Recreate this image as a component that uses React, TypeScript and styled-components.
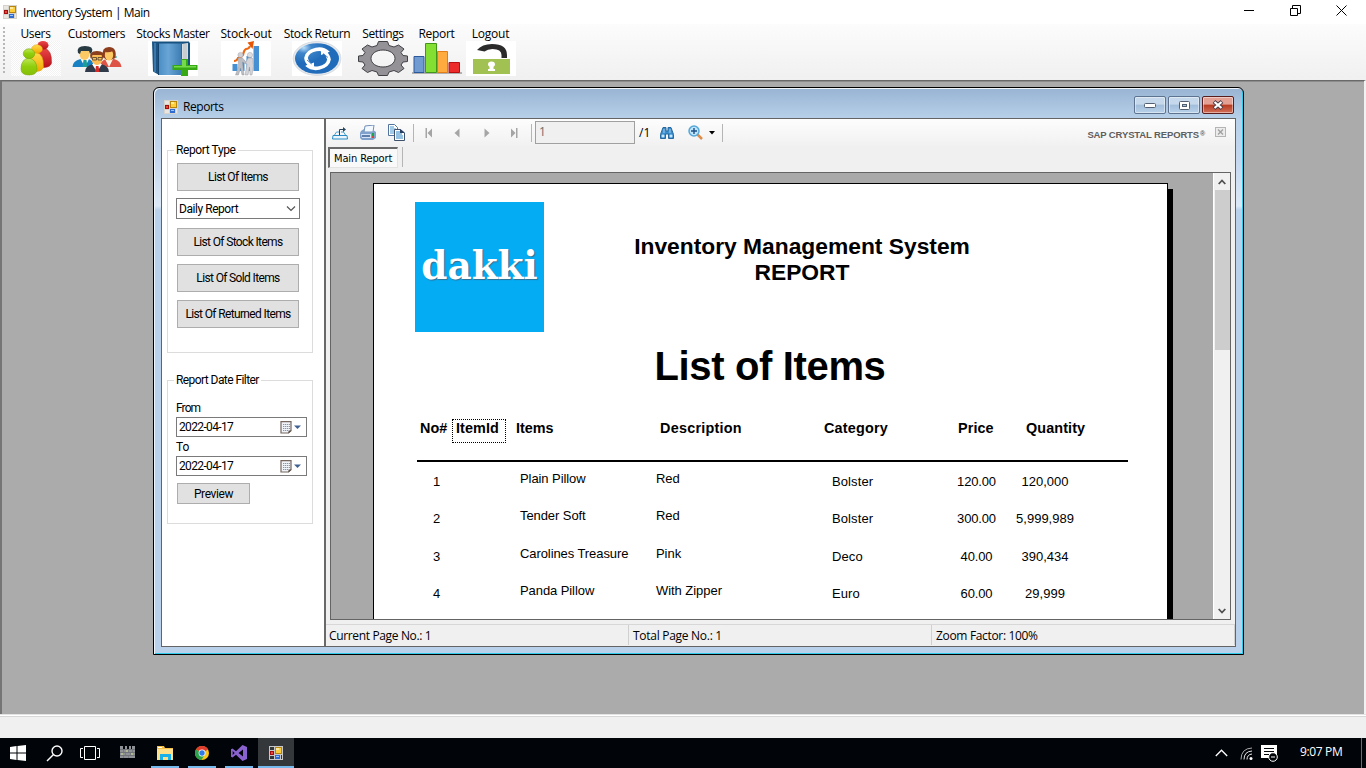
import React from 'react';
import styled, { createGlobalStyle } from 'styled-components';

const Global = createGlobalStyle`
  * { box-sizing: border-box; }
  body { margin: 0; overflow: hidden; background: #ababab; }
  svg { display: block; flex: none; }
`;

const segoe = `"Open Sans", "Noto Sans", sans-serif`;
const small = `Roboto, "Liberation Sans", sans-serif`;
const arial = `"Liberation Sans", Arial, sans-serif`;

const Screen = styled.div`
  width: 1366px;
  height: 768px;
  display: flex;
  flex-direction: column;
  overflow: hidden;
  color: #000;
  font: 12px ${segoe};
  white-space: nowrap;
`;

const TitleBar = styled.header`
  height: 24px;
  flex: none;
  display: flex;
  align-items: center;
  padding: 0 19px 0 3px;
  background: #fff;
`;

const AppTitle = styled.span<{ $spacing: number; $gap: number }>`
  margin-left: ${(p) => p.$gap}px;
  letter-spacing: ${(p) => p.$spacing}px;
`;

const WindowControls = styled.div`
  margin-left: auto;
  display: flex;
  gap: 35px;
  padding-bottom: 4px;
`;

const MainToolbar = styled.nav`
  height: 56px;
  flex: none;
  display: flex;
  align-items: stretch;
  background: linear-gradient(#fcfcfc, #f0f0f0);
`;

const Grip = styled.div`
  width: 3px;
  margin: 3px 4px 6px 3px;
  background: repeating-linear-gradient(#b8b8b8 0 2px, transparent 2px 4px) 0 0 / 2px 100% no-repeat;
`;

const ToolItem = styled.div<{ $width: number }>`
  width: ${(p) => p.$width}px;
  display: flex;
  flex-direction: column;
  align-items: center;
`;

const ToolLabel = styled.span<{ $spacing: number }>`
  height: 17px;
  line-height: 20px;
  letter-spacing: ${(p) => p.$spacing}px;
`;

const Workspace = styled.main`
  height: 634px;
  flex: none;
  padding: 6px 0 0 151px;
  background: #ababab;
  border-left: 2px solid #757575;
  border-top: 1px solid #696969;
  border-right: 2px solid #f2f2f2;
  box-shadow: inset 0 1px #8c8c8c;
`;

const StatusStrip = styled.footer`
  height: 24px;
  flex: none;
  background: #f0f0f0;
  border-top: 1px solid #e3e3e3;
  box-shadow: inset 0 1px #fff, inset 0 2px #d7d7d7;
`;

const ChildWindow = styled.section`
  width: 1091px;
  height: 568px;
  display: flex;
  flex-direction: column;
  border: 1px solid #000;
  border-radius: 6px 6px 0 0;
  padding: 0 7px 7px 7px;
  background: linear-gradient(#98b4d3 0, #b9d1ea 32px, #c4d7ef 70px, #dce8f6 118px, #b9d1ea 122px);
  box-shadow: inset 1px 1px #eef5fc, inset -1px -1px #2fcbea;
`;

const ChildTitle = styled.div`
  height: 30px;
  flex: none;
  display: flex;
  align-items: center;
  padding: 7px 2px 0 3px;
`;

const ChildButtons = styled.div`
  margin-left: auto;
  display: flex;
  gap: 2px;
  padding-bottom: 3px;
`;

const ChildButton = styled.span<{ $close?: boolean }>`
  width: 32px;
  height: 18px;
  display: grid;
  place-items: center;
  border: 1px solid ${(p) => (p.$close ? '#5a1d1d' : '#5e7390')};
  border-radius: 2px;
  box-shadow: inset 0 0 0 1px rgba(255, 255, 255, 0.45);
  background: ${(p) =>
    p.$close
      ? 'linear-gradient(#e3a196 0 45%, #b83a20 50%, #d0705a)'
      : 'linear-gradient(#c5d8ec 0 45%, #a2bedb 50%, #b9d2ea)'};
`;

const Client = styled.div`
  flex: 1;
  display: flex;
  border: 1px solid #646464;
  background: #f0f0f0;
  min-height: 0;
`;

const Sidebar = styled.aside`
  width: 164px;
  flex: none;
  padding: 31px 0 0 5px;
  background: #fff;
  border-right: 2px solid #696969;
  font: 12px ${small};
`;

const GroupBox = styled.div<{ $height: number; $gap?: number }>`
  width: 146px;
  height: ${(p) => p.$height}px;
  margin-bottom: ${(p) => p.$gap ?? 0}px;
  padding-left: 8px;
  border: 1px solid #dcdcdc;
`;

const Legend = styled.div<{ $spacing: number }>`
  width: fit-content;
  height: 16px;
  line-height: 16px;
  margin: -9px 0 0 -2px;
  padding: 0 2px;
  background: #fff;
  letter-spacing: ${(p) => p.$spacing}px;
`;

const FormButton = styled.div<{ $w?: number; $h?: number; $top: number; $spacing?: number }>`
  width: ${(p) => p.$w ?? 122}px;
  height: ${(p) => p.$h ?? 28}px;
  margin: ${(p) => p.$top}px 0 0 1px;
  display: flex;
  align-items: center;
  justify-content: center;
  border: 1px solid #adadad;
  background: #e1e1e1;
  letter-spacing: ${(p) => p.$spacing ?? -0.64}px;
`;

const Field = styled.div<{ $w: number; $h: number; $top: number; $spacing?: number }>`
  width: ${(p) => p.$w}px;
  height: ${(p) => p.$h}px;
  margin-top: ${(p) => p.$top}px;
  padding: 0 3px 0 2px;
  display: flex;
  align-items: center;
  justify-content: space-between;
  border: 1px solid #7a7a7a;
  background: #fff;
  letter-spacing: ${(p) => p.$spacing ?? -0.65}px;
`;

const FieldLabel = styled.div<{ $top: number }>`
  height: 14px;
  line-height: 14px;
  margin-top: ${(p) => p.$top}px;
  letter-spacing: -0.7px;
  letter-spacing: ${(p) => (p.$top > 5 ? -0.9 : -0.2)}px;
`;

const Viewer = styled.div`
  flex: 1;
  display: flex;
  flex-direction: column;
  min-width: 0;
`;

const ViewerToolbar = styled.div`
  height: 27px;
  flex: none;
  display: flex;
  align-items: center;
  padding: 0 9px 0 6px;
  background: linear-gradient(#fdfdfd, #f1f1f1);
`;

const Slot = styled.span<{ $gap: number }>`
  margin-left: ${(p) => p.$gap}px;
`;

const Separator = styled.i<{ $gap: number; $h?: number }>`
  width: 1px;
  height: ${(p) => p.$h ?? 18}px;
  margin-left: ${(p) => p.$gap}px;
  background: #b5b5b5;
`;

const PageInput = styled.span`
  width: 100px;
  height: 23px;
  margin-left: 3px;
  padding-left: 3px;
  border: 1px solid #a0a0a0;
  background: #f0f0f0;
  color: #6d6d6d;
  line-height: 20px;
`;

const Brand = styled.span`
  margin-left: auto;
  padding: 4px 10px 0 0;
  color: #5e5e5e;
  font: bold 9.5px ${arial};
  letter-spacing: -0.14px;
`;

const Registered = styled.span`
  margin-left: 1px;
  font-size: 7px;
  vertical-align: 2px;
`;

const TabRow = styled.div`
  height: 26px;
  flex: none;
  display: flex;
  padding: 1px 0 0 2px;
`;

const Tab = styled.div`
  width: 70px;
  height: 21px;
  padding-left: 4px;
  border: 2px solid;
  border-color: #696969 #e3e3e3 #e3e3e3 #696969;
  border-right-width: 1px;
  border-bottom-width: 1px;
  background: #f9f9f9;
  font: 11px/19px "DejaVu Sans Condensed", ${segoe};
  letter-spacing: -0.12px;
`;

const ReportArea = styled.div`
  height: 448px;
  flex: none;
  margin: 0 4px 0 4px;
  display: flex;
  border: 1px solid #646464;
  background: #a9a9a9;
`;

const Canvas = styled.div`
  flex: 1;
  padding: 10px 0 0 42px;
  overflow: hidden;
`;

const Sheet = styled.article`
  width: 795px;
  height: 520px;
  padding: 18px 0 0 41px;
  border: 1px solid #000;
  background: #fff;
  box-shadow: 5px 6px #000;
  font-family: ${arial};
`;

const SheetTop = styled.div`
  display: flex;
  height: 130px;
`;

const Logo = styled.div`
  width: 129px;
  height: 130px;
  flex: none;
  background: #04acf4;
  color: #fff;
  text-align: center;
  font: bold 39px/127px "DejaVu Serif", serif;
  text-shadow: 1px 1px 1px #356f91;
`;

const LogoWord = styled.span`
  display: block;
  transform: scaleX(0.96);
`;

const ReportTitle = styled.div`
  width: 380px;
  margin-left: 68px;
  padding-top: 31px;
  text-align: center;
  font-weight: bold;
  font-size: 22.8px;
  line-height: 26px;
`;

const Heading = styled.h1`
  width: 710px;
  margin: 10px 0 28px;
  text-align: center;
  font-size: 40px;
  letter-spacing: -0.35px;
  line-height: 48px;
`;

const Table = styled.div`
  width: 711px;
  margin-left: 2px;
`;

const TableRow = styled.div<{ $head?: boolean }>`
  display: grid;
  grid-template-columns: 35px 54px 150px 168px 128px 49px 88px;
  height: ${(p) => (p.$head ? '44px' : '37.5px')};
  margin-bottom: ${(p) => (p.$head ? 1 : 0)}px;
  align-items: ${(p) => (p.$head ? 'start' : 'center')};
  border-bottom: ${(p) => (p.$head ? '2px solid #000' : 'none')};
  font-size: ${(p) => (p.$head ? 14.4 : 13)}px;
  font-weight: ${(p) => (p.$head ? 'bold' : 'normal')};
  line-height: 20px;
`;

const Cell = styled.span<{ $indent?: number; $raised?: boolean; $center?: boolean; $selected?: boolean; $spacing?: number }>`
  padding-left: ${(p) => p.$indent ?? 0}px;
  padding-bottom: ${(p) => (p.$raised ? 6 : 0)}px;
  text-align: ${(p) => (p.$center ? 'center' : 'left')};
  letter-spacing: ${(p) => p.$spacing ?? 0}px;
  ${(p) => p.$selected && 'height: 24px; margin-top: 1px; line-height: 17px; border: 1px dotted #000;'}
`;

const ScrollBar = styled.div`
  width: 17px;
  display: flex;
  flex-direction: column;
  align-items: center;
  background: #f0f0f0;
  border-left: 1px solid #fff;
`;

const ScrollArrow = styled.span`
  height: 17px;
  display: grid;
  place-items: center;
`;

const ScrollThumb = styled.span`
  width: 15px;
  height: 160px;
  margin-bottom: auto;
  background: #cdcdcd;
`;

const ViewerStatus = styled.div`
  height: 22px;
  margin-top: 4px;
  display: flex;
  border-top: 1px solid #d7d7d7;
  line-height: 21px;
`;

const StatusCell = styled.span<{ $spacing: number; $indent?: number }>`
  width: 303px;
  height: 20px;
  padding-left: ${(p) => p.$indent ?? 4}px;
  border-right: 1px solid #d0d0d0;
  letter-spacing: ${(p) => p.$spacing}px;
`;

const Taskbar = styled.footer`
  height: 30px;
  flex: none;
  display: flex;
  background: #010409;
  color: #fff;
`;

const TaskItem = styled.span<{ $w: number; $line?: number; $active?: boolean }>`
  width: ${(p) => p.$w}px;
  height: 30px;
  display: grid;
  place-items: center;
  background: ${(p) => (p.$active ? '#35383b' : 'transparent')};
  background-image: ${(p) => (p.$line ? 'linear-gradient(#76b9ed, #76b9ed)' : 'none')};
  background-repeat: no-repeat;
  background-position: center bottom;
  background-size: ${(p) => p.$line ?? 0}px 2px;
`;

const Tray = styled.div`
  margin-left: auto;
  display: flex;
  align-items: center;
`;

const Clock = styled.span`
  width: 64px;
  height: 30px;
  padding-left: 2px;
  line-height: 28px;
  letter-spacing: -0.35px;
  border-right: 1px solid #6a6c6e;
  margin: 0 4px 0 20px;
`;

const FormIcon = ({ dark }: { dark?: boolean }) => (
  <svg width="14" height="14" viewBox="0 0 14 14">
    <rect width="14" height="14" fill={dark ? '#c8c8c8' : '#d6d2cc'} />
    <path d="M1 1h4v3H1zM1 10h4v3H1zM12 9h1v4h-1z" fill={dark ? '#34373a' : '#e9e6e0'} />
    <rect x="1" y="5" width="4" height="4" fill="#a50d0d" />
    <rect x="2" y="6" width="2" height="2" fill="#e8483c" />
    <rect x="6" y="1" width="7" height="7" fill="#b8860b" />
    <rect x="7" y="2" width="5" height="5" fill="#ffce3c" />
    <rect x="7" y="2" width="3" height="2" fill="#ffe99a" />
    <rect x="6" y="9" width="5" height="4" fill="#2f6bd0" />
    <rect x="7" y="10" width="3" height="1" fill="#9cc4ff" />
  </svg>
);

const UsersIcon = () => (
  <svg width="50" height="35" viewBox="0 0 50 35">
    <defs>
      <pattern id="dots" width="2" height="2" patternUnits="userSpaceOnUse">
        <path d="M0 0h1v1H0zM1 1h1v1H1z" fill="#f2f2f2" />
      </pattern>
      <linearGradient id="green" x2="0" y2="1"><stop stopColor="#c0e858" /><stop offset=".5" stopColor="#8fce0c" /><stop offset="1" stopColor="#86bf08" /></linearGradient>
      <linearGradient id="yellow" x2="0" y2="1"><stop stopColor="#ffdc4c" /><stop offset="1" stopColor="#f2a800" /></linearGradient>
      <linearGradient id="red" x2="0" y2="1"><stop stopColor="#ec4848" /><stop offset="1" stopColor="#b81018" /></linearGradient>
    </defs>
    <rect width="50" height="35" fill="#fff" />
    <rect width="50" height="35" fill="url(#dots)" />
    <path d="M26 18q0-10 7-11 8 2 7.500 15-1 4-7 4.500-6 0-7.500-5z" fill="url(#red)" stroke="#a50f14" strokeWidth=".5" />
    <ellipse cx="32" cy="4.300" rx="5.500" ry="4.300" fill="url(#red)" />
    <path d="M17 22q0-10 8-11 8 2 7.500 15-1 4-7 4.500-7 0-8-4z" fill="url(#yellow)" stroke="#dc9600" strokeWidth=".5" />
    <ellipse cx="26" cy="8" rx="5.500" ry="4.300" fill="url(#yellow)" stroke="#dc9600" strokeWidth=".4" />
    <path d="M10 28q0-10 8-11 8 2 8 11 0 6-8 6t-8-6z" fill="url(#green)" stroke="#77a706" strokeWidth=".6" />
    <ellipse cx="18" cy="12.700" rx="5.700" ry="4.900" fill="url(#green)" stroke="#77a706" strokeWidth=".6" />
  </svg>
);

const CustomersIcon = () => (
  <svg width="50" height="35" viewBox="0 0 50 35">
    <path d="M.5 26q0-6 8-8h8q5 1 5 8z" fill="#1881c4" />
    <path d="M8.500 18H17l-4 8z" fill="#fff" />
    <path d="M11.500 19h3l1 7h-5z" fill="#1c9d96" />
    <ellipse cx="12.500" cy="13" rx="5" ry="6" fill="#fdc964" />
    <path d="M6 12q-2-7 7-7t7 6l-2 2-1-3H9l-1 3z" fill="#283a42" />
    <path d="M28 26q0-6 6-8h8q7 2 7.500 8z" fill="#dd5447" />
    <path d="M33 18h8l-4 8z" fill="#fff3e6" />
    <path d="M31 16q-2-10 6-10t6.500 11l-5 2h-4z" fill="#8e3d1d" />
    <ellipse cx="37" cy="14" rx="4.200" ry="5.500" fill="#fdc964" />
    <path d="M33 11q4 1 8-1v-2h-7z" fill="#8e3d1d" />
    <path d="M43 15h1.500v2H43z" fill="#25a99c" />
    <path d="M13 31q0-6 8-8h8q8 2 8 8z" fill="#2f3a4a" />
    <path d="M20 23h10l-5 8z" fill="#fff" />
    <path d="M24 25h2.500l1 6h-4.500z" fill="#d72b27" />
    <ellipse cx="25" cy="17.500" rx="5.500" ry="6.500" fill="#fbbd55" />
    <path d="M18.500 17q-2-7 6.500-7t6.500 7l-1 1-1-4h-9l-1 4z" fill="#8a3f1d" />
    <path d="M20.500 16.500h4v2.500h-4zM26 16.500h4v2.500h-4z" fill="none" stroke="#4b3b2b" strokeWidth=".8" />
  </svg>
);

const BookIcon = () => (
  <svg width="50" height="35" viewBox="0 0 50 35">
    <defs>
      <linearGradient id="book"><stop stopColor="#4c8ec4" /><stop offset=".4" stopColor="#69a5d6" /><stop offset="1" stopColor="#3a7ab0" /></linearGradient>
    </defs>
    <rect width="50" height="35" fill="#fff" />
    <path d="M4 .5h37l1 2v22l-5 8z" fill="#17517f" />
    <path d="M33 3l7-1v26l-6 5z" fill="#d9dcdf" />
    <path d="M36 3v28M38 3v27" stroke="#a3acb2" strokeWidth=".6" />
    <path d="M4 .5l7 2.500v31l-6-3.500z" fill="#1c5585" />
    <path d="M7 2v29" stroke="#5c9bcd" />
    <path d="M11 2.500h23V34H11z" fill="url(#book)" />
    <path d="M10.500 2.500V34" stroke="#12446f" />
    <path d="M33.500 3v30" stroke="#2c6699" />
    <path d="M33 18h7v6h9.500v5H40v6h-7v-6h-8.500v-5H33z" fill="#35a814" />
    <path d="M34 19h4v6h10v1.500H26V25h8z" fill="#74d94b" />
  </svg>
);

const StockOutIcon = () => (
  <svg width="50" height="35" viewBox="0 0 50 35">
    <rect width="50" height="35" fill="#fff" />
    <path d="M11.500 23h5v7h-5zM18.500 19h5v11h-5zM25.500 15h5v15h-5zM32.500 5H38v25h-5.500z" fill="#4590d2" />
    <path d="M13 20q3 0 4-3 3 0 5-3 1-5 3-6 3 0 4-3" fill="none" stroke="#ec6913" strokeWidth="2.200" />
    <path d="M26.500 1.500L33 0l-1.500 8z" fill="#e65605" />
    <circle cx="19.500" cy="14" r="2.600" fill="#d0d0d5" stroke="#a5a5ac" strokeWidth=".5" />
    <circle cx="29" cy="14" r="2.600" fill="#dedee1" stroke="#a5a5ac" strokeWidth=".5" />
    <path d="M17 17h4.500l4 4.500-.8 1.500-3.200-2 .5 5 1 8h-2l-1.500-7-2 7h-3l3-9z" fill="#bcbdc3" stroke="#8e9098" strokeWidth=".4" />
    <path d="M27 17h4.500l1 8-1.500 9h-2l-.5-8-1.500 8h-3l2-11-1.500-1z" fill="#d3d3d8" stroke="#8e9098" strokeWidth=".4" />
  </svg>
);

const ReturnIcon = () => (
  <svg width="50" height="35" viewBox="0 0 50 35">
    <defs><radialGradient id="ret" cx=".2" cy=".15"><stop stopColor="#b9ddfa" /><stop offset=".35" stopColor="#3f86cb" /><stop offset="1" stopColor="#216cba" /></radialGradient></defs>
    <rect width="50" height="35" fill="#fff" />
    <ellipse cx="25" cy="17.500" rx="24" ry="17" fill="#e4e8ec" stroke="#c9ced4" strokeWidth=".6" />
    <ellipse cx="25" cy="17.500" rx="22" ry="15.300" fill="url(#ret)" />
    <path d="M36 11.500Q31 7 24 8.500q-9 2-10 8.500.5 4 4 7" fill="none" stroke="#fff" strokeWidth="3.600" />
    <path d="M13 25l9-3.500V28z" fill="#fff" />
    <path d="M15 24q5 4.500 12 3 9-2 10-8.500-.5-4-4-7" fill="none" stroke="#fff" strokeWidth="3.600" />
    <path d="M38 10.500L29 14V7.500z" fill="#fff" />
    <path d="M15 19l4.500 4M31 12.500l5 4" stroke="#2d74bd" strokeWidth=".8" />
  </svg>
);

const GearIcon = () => (
  <svg width="50" height="35" viewBox="0 0 50 35">
    <path
      fillRule="evenodd"
      d="M20.500.5h9l1.500 4 5 1.500 4.500-2 5.500 4-3 3.500 2 3 4.500.5v5.500l-4.500.5-2 3 3 3.500-5.500 4-4.500-2-5 1.500-1.500 3.500h-9l-1.500-3.500-5-1.500-4.500 2L4 27.500 7 24l-2-3-4.500-.5V15l4.500-.5 2-3L4 8l5.500-4L14 6l5-1.500zM25 9c-7 0-12 3.800-12 8.500s5 8.500 12 8.500 12-3.800 12-8.500S32 9 25 9z"
      fill="#949297"
      stroke="#414046"
      strokeWidth="1"
    />
  </svg>
);

const ChartIcon = () => (
  <svg width="50" height="35" viewBox="0 0 50 35">
    <path d="M0 32h50" stroke="#717171" />
    <path d="M2 15.500h10v16H2z" fill="#709bd1" stroke="#2c599c" />
    <path d="M13.500 2.500h11v29h-11z" fill="#83df32" stroke="#3f961b" />
    <path d="M25.500 10.500h10v21h-10z" fill="#ffab3d" stroke="#e37d16" />
    <path d="M37 21.500h10.500v10H37z" fill="#ed2b2b" stroke="#b90e12" />
  </svg>
);

const LockIcon = () => (
  <svg width="50" height="35" viewBox="0 0 50 35">
    <rect width="50" height="35" fill="#fff" />
    <rect x="7" y="18" width="37" height="15" fill="#a2c153" />
    <path d="M11 9q5-6 15-6 15 0 15 11v3h-5.500v-3q0-6-9-6-5 0-8 2.500z" fill="#2b2b2b" />
    <path d="M22 23.500q0-3 3.500-3t3.500 3q0 1.500-1.500 2.200V28H29v2h-7v-2h1.500v-2.300q-1.500-.7-1.500-2.200z" fill="#fff" />
  </svg>
);

const CalendarIcon = () => (
  <svg width="23" height="13" viewBox="0 0 23 13">
    <path d="M1 .7h10v9L8.500 12H1z" fill="#f0f3f7" stroke="#75665f" strokeWidth="1.200" />
    <path d="M3 3.500h7M3 5.500h7M3 7.500h7M3 9.500h5" stroke="#8596aa" strokeDasharray="1.300 .7" />
    <path d="M8.500 12.500l3-3h-3z" fill="#5b4e4a" />
    <path d="M14 4.500h7L17.500 8z" fill="#41608f" />
  </svg>
);

const tools = [
  { label: 'Users', width: 51, spacing: -0.35, icon: <UsersIcon /> },
  { label: 'Customers', width: 71, spacing: -0.35, icon: <CustomersIcon /> },
  { label: 'Stocks Master', width: 82, spacing: -0.37, icon: <BookIcon /> },
  { label: 'Stock-out', width: 64, spacing: -0.2, icon: <StockOutIcon /> },
  { label: 'Stock Return', width: 78, spacing: -0.4, icon: <ReturnIcon /> },
  { label: 'Settings', width: 54, spacing: -0.4, icon: <GearIcon /> },
  { label: 'Report', width: 53, spacing: -0.3, icon: <ChartIcon /> },
  { label: 'Logout', width: 55, spacing: -0.2, icon: <LockIcon /> },
];

const items = [
  ['1', 'Plain Pillow', 'Red', 'Bolster', '120.00', '120,000'],
  ['2', 'Tender Soft', 'Red', 'Bolster', '300.00', '5,999,989'],
  ['3', 'Carolines Treasure', 'Pink', 'Deco', '40.00', '390,434'],
  ['4', 'Panda Pillow', 'With Zipper', 'Euro', '60.00', '29,999'],
];

const ViewerTools = () => (
  <ViewerToolbar>
    <svg width="16" height="14" viewBox="0 0 16 14">
      <path d="M1 9.500h14l.5 3.500H.5z" fill="#eaf6fc" stroke="#2a8cc4" />
      <path d="M2.500 9l2-3H7M13.500 9l-2-3H9" fill="none" stroke="#4ba3d1" />
      <path d="M7.500 9V3.500H12" fill="none" stroke="#24435a" />
      <path d="M11 1l3 2.500-3 2.500z" fill="#24435a" />
    </svg>
    <Slot $gap={12}>
      <svg width="17" height="15" viewBox="0 0 17 15">
        <path d="M5 1l9-1-1 7H4z" fill="#f4f9ff" stroke="#7190b8" />
        <path d="M1 6l3-2v3h9V5l3 2v6l-3 2H2l-2-2V8z" fill="#7fa1cc" />
        <path d="M1 9h10v4H2z" fill="#d4e3f5" />
        <path d="M2 11h8" stroke="#3a5d91" strokeWidth="1.500" />
        <path d="M12 8h2v3h-2z" fill="#22a24a" /><path d="M12 11h2v2h-2z" fill="#d1443c" />
      </svg>
    </Slot>
    <Slot $gap={11}>
      <svg width="17" height="17" viewBox="0 0 17 17">
        <path d="M.5.5h6l3 3v8h-9z" fill="#fff" stroke="#52749f" />
        <path d="M2 3h4M2 5h6M2 7h5M2 9h5" stroke="#4795cf" />
        <path d="M6.500 5.500h6l4 3.500v7.500h-10z" fill="#fff" stroke="#3f506d" />
        <path d="M8 8h4M8 10h6M8 12h7M8 14h7" stroke="#2b83c4" />
        <path d="M12 5l5 4h-5z" fill="#263f62" />
      </svg>
    </Slot>
    <Separator $gap={8} />
    <Slot $gap={11}><svg width="8" height="10" viewBox="0 0 8 10"><path d="M.5 0h1.500v10H.5zM7 .5v9L2.500 5z" fill="#a5a5a5" /></svg></Slot>
    <Slot $gap={21}><svg width="6" height="10" viewBox="0 0 6 10"><path d="M5.500.5v9L.5 5z" fill="#a5a5a5" /></svg></Slot>
    <Slot $gap={24}><svg width="6" height="10" viewBox="0 0 6 10"><path d="M.5.5v9l5-4.500z" fill="#a5a5a5" /></svg></Slot>
    <Slot $gap={20}><svg width="8" height="10" viewBox="0 0 8 10"><path d="M6 0h1.500v10H6zM1 .5v9L5.500 5z" fill="#a5a5a5" /></svg></Slot>
    <Separator $gap={13} />
    <PageInput>1</PageInput>
    <Slot $gap={4}>/1</Slot>
    <Slot $gap={10}>
      <svg width="14" height="12" viewBox="0 0 14 12">
        <path d="M3 .5h3V4h2V.5h3l2.500 7v4H8.500V7h-3v4.500h-5v-4z" fill="#3b8dcb" stroke="#27699f" />
        <path d="M2 8h2v2H2zM10 8h2v2h-2zM4 2v4M10 2v4" fill="#d6efff" stroke="#b9e2fa" strokeWidth=".8" />
      </svg>
    </Slot>
    <Slot $gap={14}>
      <svg width="16" height="16" viewBox="0 0 16 16">
        <path d="M9 9l5 5" stroke="#db8d4c" strokeWidth="2.500" />
        <circle cx="6" cy="6" r="5" fill="#bfe5fb" stroke="#55a7d9" strokeWidth="1.500" />
        <path d="M3 6h6M6 3v6" stroke="#1e4f86" strokeWidth="1.400" />
      </svg>
    </Slot>
    <Slot $gap={5}><svg width="6" height="4" viewBox="0 0 6 4"><path d="M0 0h6L3 3.500z" fill="#000" /></svg></Slot>
    <Separator $gap={7} />
    <Brand>SAP CRYSTAL REPORTS<Registered>®</Registered></Brand>
    <svg width="11" height="11" viewBox="0 0 11 11">
      <rect x=".5" y=".5" width="10" height="9" fill="#ececec" stroke="#b4b4b4" />
      <path d="M3 2.500l5 5M8 2.500l-5 5" stroke="#a0a0a0" strokeWidth="1.400" />
    </svg>
  </ViewerToolbar>
);

const Report = () => (
  <Sheet>
    <SheetTop>
      <Logo><LogoWord>dakki</LogoWord></Logo>
      <ReportTitle>Inventory Management System<br />REPORT</ReportTitle>
    </SheetTop>
    <Heading>List of Items</Heading>
    <Table>
      <TableRow $head>
        <Cell $indent={3}>No#</Cell>
        <Cell $indent={3} $selected $spacing={0.1}>ItemId</Cell>
        <Cell $indent={10}>Items</Cell>
        <Cell $indent={4} $spacing={0.25}>Description</Cell>
        <Cell $spacing={0.2}>Category</Cell>
        <Cell $indent={6} $spacing={0.1}>Price</Cell>
        <Cell $indent={25} $spacing={0.1}>Quantity</Cell>
      </TableRow>
      {items.map(([no, name, description, category, price, quantity]) => (
        <TableRow key={no}>
          <Cell $indent={16}>{no}</Cell>
          <Cell />
          <Cell $indent={14} $raised $spacing={-0.08}>{name}</Cell>
          <Cell $raised $spacing={-0.05}>{description}</Cell>
          <Cell $indent={8} $spacing={0.1}>{category}</Cell>
          <Cell $center $spacing={-0.15}>{price}</Cell>
          <Cell $center>{quantity}</Cell>
        </TableRow>
      ))}
    </Table>
  </Sheet>
);

export default function App() {
  return (
    <Screen>
      <Global />
      <TitleBar>
        <FormIcon />
        <AppTitle $gap={6} $spacing={-0.47}>Inventory System | Main</AppTitle>
        <WindowControls>
          <svg width="11" height="11" viewBox="0 0 11 11"><path d="M0 5.500h10" stroke="#000" /></svg>
          <svg width="11" height="11" viewBox="0 0 11 11"><path d="M.5 3.500h7v7h-7zM2.500 3V.5h8v8H8" fill="none" stroke="#000" /></svg>
          <svg width="11" height="11" viewBox="0 0 11 11"><path d="M.5.5l10 10M10.500.5l-10 10" stroke="#000" /></svg>
        </WindowControls>
      </TitleBar>
      <MainToolbar>
        <Grip />
        {tools.map((t) => (
          <ToolItem key={t.label} $width={t.width}>
            <ToolLabel $spacing={t.spacing}>{t.label}</ToolLabel>
            {t.icon}
          </ToolItem>
        ))}
      </MainToolbar>
      <Workspace>
        <ChildWindow>
          <ChildTitle>
            <FormIcon />
            <AppTitle $gap={5} $spacing={-0.45}>Reports</AppTitle>
            <ChildButtons>
              <ChildButton><svg width="12" height="5" viewBox="0 0 12 5"><rect x=".5" y=".5" width="11" height="4" rx="1" fill="#fff" stroke="#535e70" /></svg></ChildButton>
              <ChildButton><svg width="11" height="9" viewBox="0 0 11 9"><rect x=".5" y=".5" width="10" height="8" rx="1" fill="#fff" stroke="#535e70" /><rect x="3.500" y="3.500" width="4" height="2" fill="#a9c3de" stroke="#535e70" /></svg></ChildButton>
              <ChildButton $close><svg width="12" height="10" viewBox="0 0 12 10"><path d="M2 1.500l8 7M10 1.500l-8 7" stroke="#4a3c46" strokeWidth="4" /><path d="M2.500 2l7 6M9.500 2l-7 6" stroke="#fff" strokeWidth="2.200" /></svg></ChildButton>
            </ChildButtons>
          </ChildTitle>
          <Client>
            <Sidebar>
              <GroupBox $height={203} $gap={27}>
                <Legend $spacing={-0.4}>Report Type</Legend>
                <FormButton $top={5}>List Of Items</FormButton>
                <Field $w={124} $h={21} $top={7} $spacing={-0.45}>
                  Daily Report
                  <svg width="10" height="6" viewBox="0 0 10 6"><path d="M1 .5l4 4 4-4" fill="none" stroke="#555" strokeWidth="1.200" /></svg>
                </Field>
                <FormButton $top={9}>List Of Stock Items</FormButton>
                <FormButton $top={8}>List Of Sold Items</FormButton>
                <FormButton $top={8}>List Of Returned Items</FormButton>
              </GroupBox>
              <GroupBox $height={144}>
                <Legend $spacing={-0.57}>Report Date Filter</Legend>
                <FieldLabel $top={13}>From</FieldLabel>
                <Field $w={131} $h={20} $top={2}>2022-04-17<CalendarIcon /></Field>
                <FieldLabel $top={3}>To</FieldLabel>
                <Field $w={131} $h={20} $top={2}>2022-04-17<CalendarIcon /></Field>
                <FormButton $w={73} $h={21} $top={7} $spacing={-0.4}>Preview</FormButton>
              </GroupBox>
            </Sidebar>
            <Viewer>
              <ViewerTools />
              <TabRow>
                <Tab>Main Report</Tab>
                <Separator $gap={4} $h={20} />
              </TabRow>
              <ReportArea>
                <Canvas><Report /></Canvas>
                <ScrollBar>
                  <ScrollArrow><svg width="8" height="6" viewBox="0 0 8 6"><path d="M.7 5L4 1.500 7.300 5" fill="none" stroke="#505050" strokeWidth="1.800" /></svg></ScrollArrow>
                  <ScrollThumb />
                  <ScrollArrow><svg width="8" height="6" viewBox="0 0 8 6"><path d="M.7 1L4 4.500 7.300 1" fill="none" stroke="#505050" strokeWidth="1.800" /></svg></ScrollArrow>
                </ScrollBar>
              </ReportArea>
              <ViewerStatus>
                <StatusCell $spacing={-0.35} $indent={3}>Current Page No.: 1</StatusCell>
                <StatusCell $spacing={-0.28}>Total Page No.: 1</StatusCell>
                <StatusCell $spacing={-0.33}>Zoom Factor: 100%</StatusCell>
              </ViewerStatus>
            </Viewer>
          </Client>
        </ChildWindow>
      </Workspace>
      <StatusStrip />
      <Taskbar>
        <TaskItem $w={36}>
          <svg width="16" height="16" viewBox="0 0 16 16"><path d="M0 2l6.500-1v6.500H0zM7.500.9L16 0v7.500H7.500zM0 8.500h6.500V15L0 14zM7.500 8.500H16V16l-8.500-1z" fill="#fff" /></svg>
        </TaskItem>
        <TaskItem $w={36}>
          <svg width="17" height="17" viewBox="0 0 17 17"><circle cx="11" cy="6" r="5" fill="none" stroke="#fff" strokeWidth="1.400" /><path d="M7.500 9.500L1 16" stroke="#fff" strokeWidth="1.500" /></svg>
        </TaskItem>
        <TaskItem $w={36}>
          <svg width="20" height="14" viewBox="0 0 20 14"><path d="M4.500.5h11v13h-11zM3 2.500H.5v9H3M17 2.500h2.500v9H17" fill="none" stroke="#fff" /></svg>
        </TaskItem>
        <TaskItem $w={38}>
          <svg width="15" height="15" viewBox="0 0 15 15">
            <path d="M0 0h3v3h2V0h2v3h2V0h2v3h1V0h3v12H0z" fill="#8f9397" />
            <path d="M0 3.500h15M0 6.500h15M0 9.500h15" stroke="#62686c" strokeWidth=".7" />
            <path d="M3.500 4v3M8.500 4v3M12.500 4v3M5.500 7v3M10.500 7v3M3.500 10v2M8.500 10v2" stroke="#6e7478" strokeWidth=".7" />
            <path d="M6 4h2v2H6zM1 7h2v2H1zM11 7h2v2h-2z" fill="#b4b890" />
          </svg>
        </TaskItem>
        <TaskItem $w={37} $line={28}>
          <svg width="16" height="14" viewBox="0 0 16 14"><path d="M0 0h7l1 2h8v12H0z" fill="#f5c146" /><path d="M0 3h16v11H0z" fill="#ffe08a" /><path d="M1 1.500h4" stroke="#fff" /><path d="M3 14V8h11v6h-3v-3H6v3z" fill="#1ab0e8" /></svg>
        </TaskItem>
        <TaskItem $w={37} $line={28}>
          <svg width="14" height="14" viewBox="0 0 14 14"><circle cx="7" cy="7" r="7" fill="#fbc51c" /><path d="M7 7L.9 3.500A7 7 0 0 1 13.100 3.500z" fill="#e13d2e" /><path d="M.9 3.500A7 7 0 0 0 6.500 14L9.500 9 7 7z" fill="#2ba24c" /><circle cx="7" cy="7" r="3.400" fill="#fff" /><circle cx="7" cy="7" r="2.700" fill="#3079e6" /></svg>
        </TaskItem>
        <TaskItem $w={38} $line={28}>
          <svg width="16" height="16" viewBox="0 0 16 16"><path fillRule="evenodd" d="M11.500 0L16 2v12l-4.500 2L5 9.800 1.500 12.500 0 11.800V4.200l1.500-.7L5 6.200zM12 4.500L7.500 8l4.500 3.500zM1.700 6v4L3.700 8z" fill="#8a62cf" /></svg>
        </TaskItem>
        <TaskItem $w={36} $line={36} $active><FormIcon dark /></TaskItem>
        <Tray>
          <svg width="13" height="8" viewBox="0 0 13 8"><path d="M.8 7L6.500 1.200 12.200 7" fill="none" stroke="#fff" strokeWidth="1.300" /></svg>
          <Slot $gap={12}>
            <svg width="13" height="13" viewBox="0 0 13 13"><g fill="none" stroke="#e8e8e8"><path d="M1 12.500Q1 1.500 12 1" stroke="#aaa" /><path d="M4 12.500Q4 4.500 12 4" /><path d="M7 12.500Q7 7.500 12 7" /></g><circle cx="11" cy="11.500" r="1.500" fill="#fff" /></svg>
          </Slot>
          <Slot $gap={8}>
            <svg width="17" height="17" viewBox="0 0 17 17"><path d="M0 0h16v13H0z" fill="#fff" /><path d="M3 3.500h10M3 6.500h10M3 9.500h5" stroke="#010409" /><circle cx="12" cy="12" r="4.300" fill="#010409" stroke="#fff" /><path d="M10 12h4" stroke="#fff" /></svg>
          </Slot>
          <Clock>9:07 PM</Clock>
        </Tray>
      </Taskbar>
    </Screen>
  );
}
